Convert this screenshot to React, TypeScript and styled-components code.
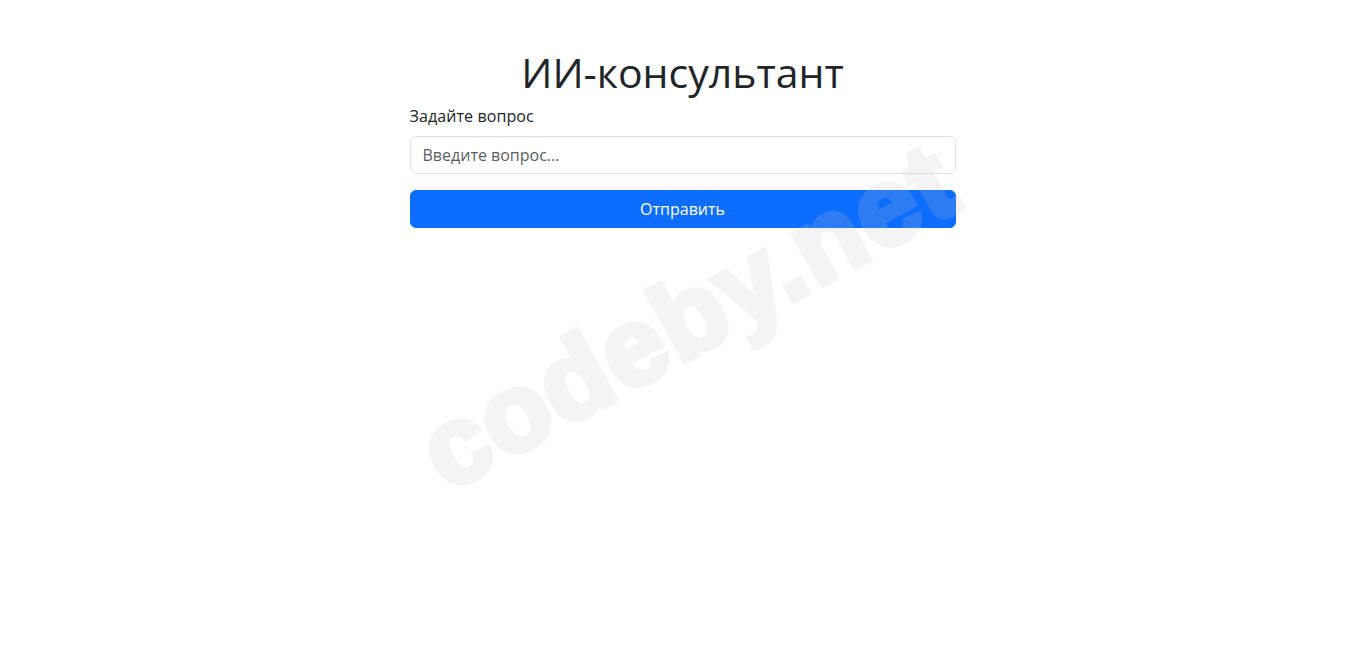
import styled, { createGlobalStyle } from "styled-components";

const GlobalStyle = createGlobalStyle`
  * {
    box-sizing: border-box;
  }
  body {
    margin: 0;
    background: #fff;
    color: #212529;
    font-family: "Open Sans", "Noto Sans", sans-serif;
    font-size: 16px;
    line-height: 1.5;
  }
`;

const Page = styled.main`
  position: relative;
  min-height: 647px;
  overflow: hidden;
`;

const Container = styled.div`
  width: 546px;
  margin: 0 auto;
  padding-top: 48px;
`;

const Title = styled.h1`
  margin: 0 0 8px;
  font-size: 41px;
  font-weight: 400;
  line-height: 48px;
  text-align: center;
`;

const Form = styled.form`
  display: flex;
  flex-direction: column;
`;

const Label = styled.label`
  display: block;
  margin-bottom: 8px;
  letter-spacing: 0.1px;
`;

const Input = styled.input`
  display: block;
  width: 100%;
  height: 38px;
  margin-bottom: 16px;
  padding: 6px 12px;
  font: inherit;
  color: #212529;
  background: #fff;
  border: 1px solid #dee2e6;
  border-radius: 6px;
  outline: none;

  &::placeholder {
    color: #595f65;
  }
`;

const SubmitButton = styled.button`
  width: 100%;
  height: 38px;
  padding: 6px 12px;
  font: inherit;
  color: #fff;
  background: #0d6efd;
  border: 1px solid #0d6efd;
  border-radius: 6px;
  cursor: pointer;
`;

const Watermark = styled.div`
  position: absolute;
  left: 688px;
  top: 316px;
  transform: translate(-50%, -50%) rotate(-29deg);
  font-family: "Liberation Sans", Arial, sans-serif;
  font-weight: 700;
  font-size: 110px;
  letter-spacing: 2px;
  line-height: 1;
  color: #c4c4c4;
  -webkit-text-stroke: 6px #c4c4c4;
  opacity: 0.18;
  pointer-events: none;
  white-space: nowrap;
`;

export default function App() {
  return (
    <Page>
      <GlobalStyle />
      <Container>
        <Title>ИИ-консультант</Title>
        <Form onSubmit={(e) => e.preventDefault()}>
          <Label htmlFor="question">Задайте вопрос</Label>
          <Input id="question" type="text" placeholder="Введите вопрос..." />
          <SubmitButton type="submit">Отправить</SubmitButton>
        </Form>
      </Container>
      <Watermark>codeby.net</Watermark>
    </Page>
  );
}
